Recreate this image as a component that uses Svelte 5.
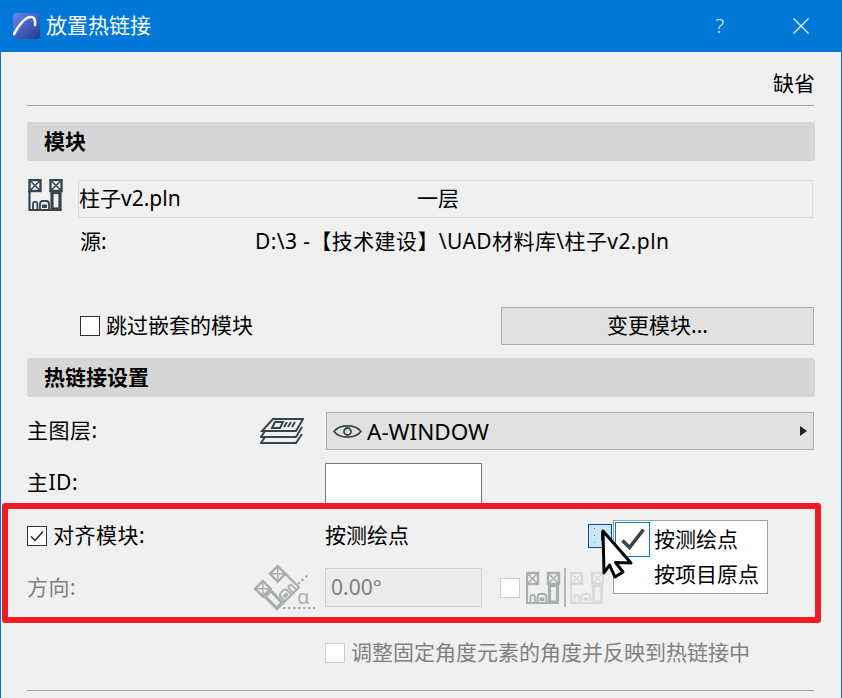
<script lang="ts">
// Hotlink placement dialog. The red frame, dropdown list and mouse pointer sit
// over the alignment rows; everything else is plain flow.
const moduleInfo = { file: "柱子v2.pln", story: "一层", path: "D:\\3 -【技术建设】\\UAD材料库\\柱子v2.pln" };
const anchorOptions = ["按测绘点", "按项目原点"];
</script>

{#snippet house()}
  <rect x="1" y="1" width="11" height="11" fill="none" stroke-width="2.400" />
  <path d="M1.500 1.500l10 10M11.500 1.500l-10 10" fill="none" stroke-width="1.500" />
  <rect x="22" y="1" width="11" height="11" fill="none" stroke-width="2.400" />
  <path d="M22.500 1.500l10 10M32.500 1.500l-10 10" fill="none" stroke-width="1.500" />
  <rect x="23.500" y="13.500" width="8" height="16.500" fill="none" stroke-width="3.200" />
  <path d="M1 12v19h32" fill="none" stroke-width="2.200" />
  <path d="M4.500 31v-6a2.200 2.200 0 0 1 4.400 0v6M11.500 31v-6q0-3 3-3h3q3 0 3 3v6" fill="none" stroke-width="1.800" />
  <rect x="14" y="26" width="4" height="2.500" />
{/snippet}

<div class="dialog">
  <header class="titlebar">
    <svg class="logo" width="27" height="27" viewBox="0 0 27 27">
      <defs>
        <linearGradient id="logo-bg" x1="0" y1="0" x2="1" y2="1">
          <stop offset="0" stop-color="#6488ee" />
          <stop offset="1" stop-color="#26398a" />
        </linearGradient>
      </defs>
      <rect width="27" height="26" rx="3" fill="url(#logo-bg)" />
      <path d="M1 21C6 12 12 4 18 4c3.500 0 4.500 3 4 8" fill="none" stroke="#f4f6ff" stroke-width="2.600" stroke-linecap="round" />
    </svg>
    <span class="title">放置热链接</span>
    <span class="help">?</span>
    <svg class="close" width="16" height="16" viewBox="0 0 16 16">
      <path d="M.5.5l15 15M15.500.5l-15 15" stroke="#fff" stroke-width="1.100" />
    </svg>
  </header>

  <main class="content">
    <div class="defaults"><span>缺省</span></div>

    <div class="section first">模块</div>

    <div class="module">
      <svg class="house" width="35" height="32" viewBox="0 0 34 32">
        <g fill="#36454f" stroke="#36454f">{@render house()}</g>
      </svg>
      <div class="module-box">
        <span class="module-name">{moduleInfo.file}</span>
        <span>{moduleInfo.story}</span>
      </div>
    </div>

    <div class="source">
      <span class="source-label">源:</span>
      <span class="source-path">{moduleInfo.path}</span>
    </div>

    <div class="skip">
      <label class="check">
        <span class="box"></span>
        跳过嵌套的模块
      </label>
      <button type="button" class="change">变更模块...</button>
    </div>

    <div class="section second">热链接设置</div>

    <div class="field layer">
      <span class="label">主图层:</span>
      <svg width="44" height="26" viewBox="0 0 44 26">
        <g fill="none" stroke="#36454f" stroke-width="2">
          <path d="M13 1H43L36 13H2Z" />
          <path d="M5 13L1 19H36L42 9" />
          <path d="M5 19L1 25H36L42 16" />
          <path d="M15 4h8l-3 6h-8z" />
          <path d="M27 4l-3 5M31 4l-3 5M35 4l-3 5" />
        </g>
      </svg>
      <div class="layer-select">
        <svg width="29" height="17" viewBox="0 0 29 17">
          <path d="M1 8.500C7 1 22 1 28 8.500C22 16 7 16 1 8.500Z" fill="none" stroke="#36454f" stroke-width="1.800" />
          <circle cx="14.500" cy="8.500" r="3.500" fill="none" stroke="#36454f" stroke-width="1.800" />
        </svg>
        <span class="layer-name">A-WINDOW</span>
        <span class="arrow"></span>
      </div>
    </div>

    <div class="field id">
      <span class="label">主ID:</span>
      <span></span>
      <div class="id-input"></div>
    </div>

    <div class="aligned">
      <div class="field anchor">
        <label class="check label">
          <span class="box">
            <svg width="18" height="18" viewBox="0 0 18 18">
              <path d="M3 9.500l4 4 8-9" fill="none" stroke="#222" stroke-width="1.500" />
            </svg>
          </span>
          对齐模块:
        </label>
        <span></span>
        <div class="anchor-value">
          <span>按测绘点</span>
          <span class="anchor-button"><i></i><b></b></span>
        </div>
      </div>

      <div class="field direction">
        <span class="label">方向:</span>
        <svg class="angle" width="64" height="46" viewBox="0 0 64 46">
          <g transform="translate(24 24) rotate(-45) scale(-1 1) translate(-17 -16)" fill="#a9aeae" stroke="#a9aeae">
            {@render house()}
          </g>
          <path d="M45 20L56 10M30 44H62" fill="none" stroke="#a9aeae" stroke-width="2" stroke-dasharray="2.500 2.500" />
          <text x="44" y="40" class="alpha">α</text>
        </svg>
        <div class="direction-tail">
          <div class="angle-input">0.00°</div>
          <span class="box faint"></span>
          <svg class="mirror" width="80" height="39" viewBox="0 0 80 39">
            <g transform="translate(0 4)" fill="#a9aeae" stroke="#a9aeae">{@render house()}</g>
            <path d="M39 0V39" stroke="#b5b9b9" stroke-width="2" />
            <g transform="translate(44 4)" fill="#d9dbdb" stroke="#d9dbdb">{@render house()}</g>
          </svg>
        </div>
      </div>

      <div class="frame"></div>

      <ul class="menu">
        {#each anchorOptions as option, i (option)}
          <li>
            <span class="tick" class:on={i === 0}>
              {#if i === 0}
                <svg width="24" height="24" viewBox="0 0 24 24">
                  <path d="M1.500 12.500L8.500 19.500L22.500 1.500" fill="none" stroke="#36454f" stroke-width="3.600" />
                </svg>
              {/if}
            </span>
            {option}
          </li>
        {/each}
      </ul>

      <svg class="pointer" width="36" height="54" viewBox="0 0 36 54">
        <path d="M3 3L4 45L9.500 37L15 49L23 44L15.500 34.500L31 35Z" fill="#fff" stroke="#000" stroke-width="3" stroke-linejoin="round" />
      </svg>
    </div>

    <div class="field adjust">
      <span></span>
      <span></span>
      <label class="check muted">
        <span class="box faint"></span>
        调整固定角度元素的角度并反映到热链接中
      </label>
    </div>

    <div class="rule"></div>
  </main>
</div>

<style>
  :global(body) {
    background: #f0f0f0;
  }
  .dialog {
    width: 842px;
    height: 698px;
    box-sizing: border-box;
    border: solid #0078d7;
    border-width: 0 1px;
    background: #f0f0f0;
    overflow: hidden;
    color: #000;
    font-family: "Noto Sans", "Noto Sans CJK SC", sans-serif;
    font-size: 21px;
    line-height: 1.2;
  }
  .titlebar {
    height: 52px;
    margin: 0 -1px;
    display: flex;
    align-items: center;
    background: #0078d7;
    color: #fff;
  }
  .logo { margin-left: 13px; }
  .title { margin-left: 6px; flex: 1; }
  .help { font-size: 20px; font-weight: 300; margin-right: 69px; color: #e6f2fb; }
  .close { margin-right: 33px; }

  .content {
    padding: 0 27px 0 26px;
  }
  .label { letter-spacing: 0.5px; }
  .defaults {
    box-sizing: border-box;
    height: 54px;
    padding-top: 11px;
    display: flex;
    align-items: center;
    justify-content: flex-end;
    border-bottom: 1px solid #a0a0a0;
  }
  .defaults span { margin-right: -1px; }
  .section {
    height: 39px;
    padding-left: 17px;
    display: flex;
    align-items: center;
    background: #d6d6d6;
    border-radius: 3px;
    font-weight: 700;
  }
  .section.first { margin-top: 16px; margin-right: -1px; }
  .section.second { margin-top: 13px; margin-right: -1px; }

  .module { margin-top: 18px; margin-right: 1px; display: flex; align-items: flex-start; }
  .house { margin-left: 1px; }
  .module-box {
    box-sizing: border-box;
    margin: 1px 0 0 15px;
    height: 38px;
    flex: 1;
    display: flex;
    align-items: center;
    border: 1px solid #dcdcdc;
  }
  .module-name { width: 338px; }
  .source {
    margin: 9px 0 0 53px;
    height: 30px;
    display: flex;
    align-items: center;
  }
  .source-label { width: 175px; }
  .source-path { letter-spacing: 0.4px; }

  .skip {
    margin: 50px 0 0 53px;
    display: flex;
    align-items: center;
    justify-content: space-between;
  }
  .check { display: flex; align-items: center; gap: 6px; }
  .muted { color: #808080; }
  .box {
    box-sizing: border-box;
    width: 20px;
    height: 20px;
    flex: none;
    display: flex;
    align-items: center;
    justify-content: center;
    background: #fff;
    border: 1px solid #333;
  }
  .box.faint { border-color: #cccccc; }
  .change {
    box-sizing: border-box;
    width: 313px;
    height: 38px;
    padding: 0;
    background: #e1e1e1;
    border: 1px solid #adadad;
    color: #000;
    font: inherit;
  }

  .field {
    display: grid;
    grid-template-columns: 233px 65px 1fr;
    align-items: center;
  }
  .layer { margin-top: 15px; height: 38px; }
  .layer-select {
    box-sizing: border-box;
    height: 38px;
    margin-left: 1px;
    display: flex;
    align-items: center;
    padding: 0 6px;
    background: #e1e1e1;
    border: 1px solid #adadad;
  }
  .layer-name { margin-left: 5px; flex: 1; font-size: 22.5px; }
  .arrow {
    width: 0;
    height: 0;
    border-left: 7px solid #222;
    border-top: 5px solid transparent;
    border-bottom: 5px solid transparent;
  }
  .id { margin-top: 13px; height: 40px; }
  .id-input {
    box-sizing: border-box;
    width: 157px;
    height: 40px;
    background: #fff;
    border: 1px solid #7a7a7a;
    border-bottom: 0;
  }

  .aligned { position: relative; padding: 14px 0 16px; }
  .anchor { height: 38px; }
  .anchor-value { display: flex; align-items: center; position: relative; }
  .anchor-button {
    box-sizing: border-box;
    width: 24px;
    height: 24px;
    margin-left: 179px;
    display: flex;
    align-items: center;
    gap: 6px;
    padding-left: 5px;
    background: #cce4f7;
    border: 1px solid #005499;
  }
  .anchor-button i {
    width: 1px;
    height: 16px;
    background: repeating-linear-gradient(#b08a30 0 1px, transparent 1px 7px);
  }
  .anchor-button b {
    width: 0;
    height: 0;
    border-left: 6px solid #333;
    border-top: 5px solid transparent;
    border-bottom: 5px solid transparent;
  }
  .direction { margin-top: 13px; height: 39px; color: #808080; }
  .angle { margin: -4px 0 -3px -7px; overflow: visible; }
  .alpha { font-size: 20px; fill: #a9aeae; }
  .direction-tail { display: flex; align-items: center; }
  .angle-input {
    box-sizing: border-box;
    width: 157px;
    height: 39px;
    padding-left: 5px;
    display: flex;
    align-items: center;
    background: #ececec;
    border: 1px solid #cfcfcf;
  }
  .direction-tail .box { margin-left: 18px; }
  .mirror { margin-left: 6px; }

  .frame {
    position: absolute;
    left: -25px;
    right: -7px;
    top: 0;
    bottom: 0;
    border: 6px solid #ee1c25;
    border-radius: 3px;
    pointer-events: none;
  }
  .menu {
    position: absolute;
    left: 586px;
    top: 17px;
    box-sizing: border-box;
    width: 155px;
    height: 74px;
    margin: 0;
    padding: 1px;
    list-style: none;
    background: #fff;
    border: 1px solid #a0a0a0;
  }
  .menu li { height: 35px; display: flex; align-items: center; gap: 4px; }
  .tick {
    box-sizing: border-box;
    width: 35px;
    height: 35px;
    flex: none;
    display: flex;
    align-items: center;
    justify-content: center;
  }
  .tick.on { border: 1px solid #0078d7; }
  .pointer { position: absolute; left: 573px; top: 25px; }

  .adjust { margin-top: 17px; height: 20px; }
  .rule { margin-top: 30px; border-top: 1px solid #a0a0a0; }
</style>
